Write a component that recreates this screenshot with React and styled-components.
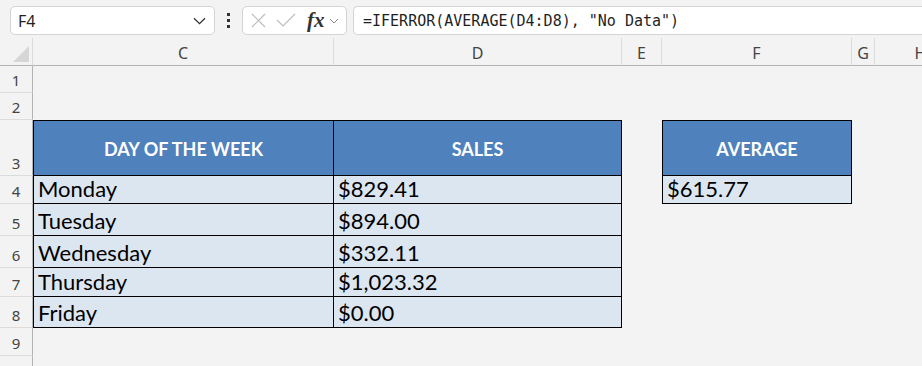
import React from 'react'
import styled, { createGlobalStyle } from 'styled-components'

const GlobalStyle = createGlobalStyle`
	html, body {
		margin: 0;
		padding: 0;
		background: #f3f3f3;
		overflow: hidden;
	}
	* {
		box-sizing: border-box;
	}
`

const columns = ['C', 'D', 'E', 'F', 'G', 'H']
const rowHeights = [27, 27, 56, 28, 32, 32, 29, 31, 28, 28]

const sales = [
	{ day: 'Monday', amount: '$829.41' },
	{ day: 'Tuesday', amount: '$894.00' },
	{ day: 'Wednesday', amount: '$332.11' },
	{ day: 'Thursday', amount: '$1,023.32' },
	{ day: 'Friday', amount: '$0.00' },
]

function App() {
	return (
		<Page>
			<GlobalStyle />
			<Toolbar>
				<NameBox>
					<span>F4</span>
					<svg width='13' height='8' viewBox='0 0 13 8'>
						<path d='M1 1.2 L6.5 6.6 L12 1.2' fill='none' stroke='#333' strokeWidth='1.3' />
					</svg>
				</NameBox>
				<Dots>
					<i />
					<i />
					<i />
				</Dots>
				<FxBox>
					<svg width='15' height='15' viewBox='0 0 15 15'>
						<path d='M1 1 L14 14 M14 1 L1 14' stroke='#bdbdbd' strokeWidth='1.2' />
					</svg>
					<svg width='20' height='15' viewBox='0 0 20 15'>
						<path d='M1 7 L7 13 L19 1' fill='none' stroke='#bdbdbd' strokeWidth='1.2' />
					</svg>
					<FxLabel>fx</FxLabel>
					<svg width='10' height='6' viewBox='0 0 10 6'>
						<path d='M1 1 L5 5 L9 1' fill='none' stroke='#8a8a8a' strokeWidth='1' />
					</svg>
				</FxBox>
				<FormulaBox>=IFERROR(AVERAGE(D4:D8), "No Data")</FormulaBox>
			</Toolbar>

			<Sheet>
				<Corner>
					<svg width='16' height='16' viewBox='0 0 16 16'>
						<path d='M16 0 L16 16 L0 16 Z' fill='#d6d6d6' />
					</svg>
				</Corner>
				{columns.map((c, i) => (
					<ColHead key={c} style={{ gridColumn: i + 2 }}>
						{c}
					</ColHead>
				))}

				{rowHeights.map((_, i) => (
					<RowHead key={i} style={{ gridRow: i + 2 }}>
						{i < 9 ? i + 1 : ''}
					</RowHead>
				))}

				<HeadCell $col={2} $row={4} $left>
					DAY OF THE WEEK
				</HeadCell>
				<HeadCell $col={3} $row={4}>
					SALES
				</HeadCell>
				{sales.map((s, i) => (
					<React.Fragment key={s.day}>
						<DataCell $col={2} $row={i + 5} $left>
							{s.day}
						</DataCell>
						<DataCell $col={3} $row={i + 5}>
							{s.amount}
						</DataCell>
					</React.Fragment>
				))}

				<HeadCell $col={5} $row={4} $left>
					AVERAGE
				</HeadCell>
				<DataCell $col={5} $row={5} $left>
					$615.77
				</DataCell>
			</Sheet>
		</Page>
	)
}

export default App

const Page = styled.div`
	width: 922px;
	height: 366px;
	overflow: hidden;
	background: #f3f3f3;
	font-family: 'Noto Sans', 'Open Sans', sans-serif;
`
const Toolbar = styled.div`
	display: flex;
	align-items: center;
	height: 38px;
	padding: 3px 0 0 10px;
`
const NameBox = styled.div`
	width: 205px;
	height: 29px;
	background: #fff;
	border: 1px solid #d4d4d4;
	border-radius: 5px;
	display: flex;
	align-items: center;
	justify-content: space-between;
	padding: 0 8px 0 7px;
	font-size: 16px;
	color: #1f1f1f;
`
const Dots = styled.div`
	width: 27px;
	display: flex;
	flex-direction: column;
	align-items: center;
	gap: 3px;

	i {
		display: block;
		width: 3px;
		height: 3px;
		background: #333;
	}
`
const FxBox = styled.div`
	width: 105px;
	height: 29px;
	background: #fff;
	border: 1px solid #d4d4d4;
	border-radius: 5px;
	display: flex;
	align-items: center;
	padding: 0 4px 0 8px;
	gap: 10px;
`
const FxLabel = styled.span`
	font-family: 'Liberation Serif', 'DejaVu Serif', serif;
	font-style: italic;
	font-weight: 700;
	font-size: 21px;
	color: #333;
	margin-left: 1px;
	margin-right: -6px;
	line-height: 1;
`
const FormulaBox = styled.div`
	flex: 1;
	margin-left: 6px;
	height: 29px;
	background: #fff;
	border: 1px solid #d4d4d4;
	border-right: none;
	border-radius: 5px 0 0 5px;
	display: flex;
	align-items: center;
	padding: 1px 0 0 9px;
	font-family: 'DejaVu Sans Mono', 'Liberation Mono', monospace;
	font-size: 15px;
	color: #1f1f1f;
	white-space: pre;
`
const Sheet = styled.div`
	display: grid;
	grid-template-columns: 33px 301px 288px 40px 190px 23px 92px 1fr;
	grid-template-rows: 28px ${rowHeights.map((h) => h + 'px').join(' ')};
`
const Corner = styled.div`
	grid-row: 1;
	grid-column: 1;
	display: flex;
	align-items: flex-end;
	justify-content: flex-end;
	padding: 0 3px 3px 0;
	border-bottom: 1px solid #b3b3b3;
	border-right: 1px solid #dadada;
`
const ColHead = styled.div`
	grid-row: 1;
	display: flex;
	align-items: center;
	justify-content: center;
	font-size: 16px;
	color: #444;
	border-bottom: 1px solid #b3b3b3;
	border-right: 1px solid #dcdcdc;
	padding-top: 2px;
`
const RowHead = styled.div`
	grid-column: 1;
	display: flex;
	align-items: flex-end;
	justify-content: center;
	padding-bottom: 2px;
	font-size: 15px;
	color: #444;
	border-right: 1px solid #b3b3b3;
	border-bottom: 1px solid #dcdcdc;
`
const Cell = styled.div`
	grid-column: ${(p) => p.$col};
	grid-row: ${(p) => p.$row};
	border-right: 1px solid #000;
	border-bottom: 1px solid #000;
	border-left: ${(p) => (p.$left ? '1px solid #000' : 'none')};
	font-family: Lato, 'Noto Sans', sans-serif;
	white-space: nowrap;
`
const HeadCell = styled(Cell)`
	background: #4f81bd;
	border-top: 1px solid #000;
	color: #fff;
	font-weight: 700;
	font-size: 18px;
	display: flex;
	align-items: center;
	justify-content: center;
	padding-top: 1px;
`
const DataCell = styled(Cell)`
	background: #dce6f1;
	color: #000;
	font-size: 22px;
	display: flex;
	align-items: flex-end;
	padding: 0 0 1px 4px;
	line-height: 1.2;
`
